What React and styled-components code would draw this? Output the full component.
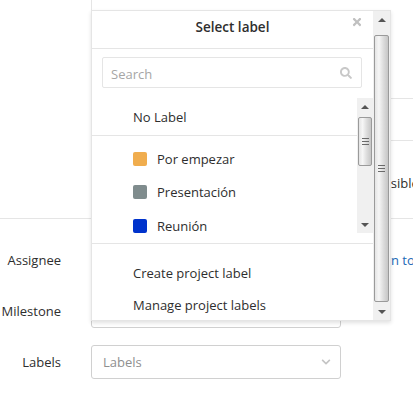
import React from 'react';
import styled, { createGlobalStyle } from 'styled-components';
import { FaTimes, FaSearch, FaChevronDown } from 'react-icons/fa';

const GlobalStyle = createGlobalStyle`
  html, body {
    margin: 0;
    padding: 0;
    background: #fff;
    overflow: hidden;
  }
  body {
    font-family: "Open Sans", "Liberation Sans", sans-serif;
    font-size: 13px;
    color: #2e2e2e;
  }
`;

const labels = [
  { name: 'Por empezar', color: '#f0ad4e' },
  { name: 'Presentación', color: '#7f8c8d' },
  { name: 'Reunión', color: '#0033cc' },
];

function App() {
  return (
    <>
      <GlobalStyle />
      <Page>
        <TopSection>
          <Row>
            <FieldLabel />
            <FieldColumn>
              <DescriptionBox />
              <TableLine />
              <HelpText>visible para todos</HelpText>
            </FieldColumn>
          </Row>
        </TopSection>

        <FormSection>
          <FormRow>
            <FieldLabel>Assignee</FieldLabel>
            <Select />
            <AssignLink>Assign to me</AssignLink>
          </FormRow>
          <FormRow>
            <FieldLabel>Milestone</FieldLabel>
            <Select />
          </FormRow>
          <FormRow>
            <FieldLabel>Labels</FieldLabel>
            <Select>
              <Placeholder>Labels</Placeholder>
              <FaChevronDown size={10} color="#c4c4c4" />
            </Select>
          </FormRow>
        </FormSection>

        <Dropdown>
          <DropdownBody>
            <Header>
              Select label
              <CloseButton><FaTimes size={12} /></CloseButton>
            </Header>
            <SearchWrap>
              <SearchBox>
                <SearchInput placeholder="Search" />
                <FaSearch size={12} color="#c8c8c8" />
              </SearchBox>
            </SearchWrap>

            <ListRow>
              <List>
                <Item $h="37px">No Label</Item>
                <Divider />
                <Items>
                  {labels.map((l) => (
                    <Item key={l.name} $h="33.5px">
                      <Swatch style={{ background: l.color }} />
                      {l.name}
                    </Item>
                  ))}
                </Items>
              </List>
              <ScrollBar $inner>
                <ArrowButton><Arrow /></ArrowButton>
                <Track $inner>
                  <Thumb $inner><Grip /></Thumb>
                </Track>
                <ArrowButton><Arrow $down /></ArrowButton>
              </ScrollBar>
            </ListRow>

            <Footer>
              <Item $h="32px">Create project label</Item>
              <Item $h="32px">Manage project labels</Item>
            </Footer>
          </DropdownBody>

          <ScrollBar>
            <ArrowButton><Arrow /></ArrowButton>
            <Track>
              <Thumb><Grip /></Thumb>
            </Track>
            <ArrowButton><Arrow $down /></ArrowButton>
          </ScrollBar>
        </Dropdown>
      </Page>
    </>
  );
}

const Page = styled.div`
  position: relative;
  width: 413px;
  height: 396px;
  overflow: hidden;
`;

const TopSection = styled.div`
  height: 219px;
  box-sizing: border-box;
  border-bottom: 1px solid #e5e5e5;
`;

const Row = styled.div`
  display: flex;
  gap: 30px;
  height: 100%;
`;

const FieldLabel = styled.div`
  width: 61px;
  flex-shrink: 0;
  text-align: right;
  white-space: nowrap;
`;

const FieldColumn = styled.div`
  flex: 1;
  display: flex;
  flex-direction: column;
`;

const DescriptionBox = styled.div`
  height: 99px;
  box-sizing: border-box;
  border-left: 1px solid #e5e5e5;
  border-bottom: 1px solid #e5e5e5;
`;

const TableLine = styled.div`
  height: 42px;
  box-sizing: border-box;
  border-bottom: 1px solid #e5e5e5;
`;

const HelpText = styled.div`
  padding: 33px 0 0 290px;
  white-space: nowrap;
`;

const FormSection = styled.div`
  display: flex;
  flex-direction: column;
  gap: 17px;
  padding-top: 24px;
`;

const FormRow = styled.div`
  display: flex;
  align-items: center;
  gap: 30px;
  height: 34px;
`;

const Select = styled.div`
  width: 250px;
  height: 34px;
  flex-shrink: 0;
  box-sizing: border-box;
  border: 1px solid #d0d0d0;
  border-radius: 3px;
  display: flex;
  align-items: center;
  justify-content: space-between;
  padding: 0 9px 0 11px;
`;

const Placeholder = styled.span`
  color: #8f8f8f;
`;

const AssignLink = styled.span`
  margin-left: -11px;
  color: #1b69b6;
  white-space: nowrap;
`;

const Dropdown = styled.div`
  position: absolute;
  left: 91px;
  top: 10px;
  width: 300px;
  height: 311px;
  box-sizing: border-box;
  border: 1px solid #e5e5e5;
  background: #fff;
  box-shadow: 0 2px 4px rgba(0, 0, 0, 0.12);
  display: flex;
  overflow: hidden;
`;

const DropdownBody = styled.div`
  flex: 1;
  min-width: 0;
  display: flex;
  flex-direction: column;
`;

const Header = styled.div`
  position: relative;
  height: 38px;
  box-sizing: border-box;
  padding-bottom: 6px;
  flex-shrink: 0;
  border-bottom: 1px solid #e5e5e5;
  display: flex;
  align-items: center;
  justify-content: center;
  font-size: 13.5px;
  font-weight: 600;
  color: #2e2e2e;
`;

const CloseButton = styled.span`
  position: absolute;
  right: 10px;
  top: 5px;
  color: #c0c0c0;
  display: flex;
`;

const SearchWrap = styled.div`
  padding: 8px 11px 10px 10px;
`;

const SearchBox = styled.div`
  height: 31px;
  box-sizing: border-box;
  border: 1px solid #e5e5e5;
  border-radius: 2px;
  display: flex;
  align-items: center;
  padding: 0 9px 0 8px;
`;

const SearchInput = styled.input`
  flex: 1;
  min-width: 0;
  border: none;
  outline: none;
  padding: 3px 0 0;
  font: inherit;
  color: #2e2e2e;
  &::placeholder {
    color: #a6a6a6;
  }
`;

const ListRow = styled.div`
  display: flex;
  height: 135px;
  flex-shrink: 0;
`;

const List = styled.div`
  flex: 1;
  overflow: hidden;
`;

const Items = styled.div`
  padding-top: 6px;
`;

const Item = styled.div`
  height: ${(p) => p.$h};
  flex-shrink: 0;
  display: flex;
  align-items: center;
  gap: 10px;
  padding-left: 41px;
  white-space: nowrap;
  color: #2e2e2e;
`;

const Swatch = styled.span`
  width: 14px;
  height: 14px;
  border-radius: 2px;
  flex-shrink: 0;
`;

const Divider = styled.div`
  height: 1px;
  background: #e5e5e5;
`;

const Footer = styled.div`
  margin-top: 10px;
  border-top: 1px solid #e5e5e5;
  padding-top: 13px;
`;

const ScrollBar = styled.div`
  width: ${(p) => (p.$inner ? '16px' : '17px')};
  flex-shrink: 0;
  background: #f0f0f0;
  display: flex;
  flex-direction: column;
`;

const ArrowButton = styled.div`
  height: 17px;
  flex-shrink: 0;
  display: flex;
  align-items: center;
  justify-content: center;
`;

const Arrow = styled.span`
  width: 0;
  height: 0;
  border-left: 4px solid transparent;
  border-right: 4px solid transparent;
  ${(p) =>
    p.$down
      ? 'border-top: 4px solid #555;'
      : 'border-bottom: 4px solid #555;'}
`;

const Track = styled.div`
  flex: 1;
  display: flex;
  flex-direction: column;
  padding: ${(p) => (p.$inner ? '2px 0 0' : '7px 0 1px')};
`;

const Thumb = styled.div`
  ${(p) => (p.$inner ? 'height: 49px;' : 'flex: 1;')}
  margin: 0 1px;
  box-sizing: border-box;
  border: 1px solid #9a9a9a;
  border-radius: 2px;
  background: linear-gradient(to right, #e4e4e4, #f6f6f6 30%, #dcdcdc 65%, #c6c6c6);
  display: flex;
  align-items: center;
  justify-content: center;
`;

const Grip = styled.span`
  width: 7px;
  height: 7px;
  background: repeating-linear-gradient(
    to bottom,
    #6a6a6a 0,
    #6a6a6a 1px,
    transparent 1px,
    transparent 3px
  );
`;

export default App;
